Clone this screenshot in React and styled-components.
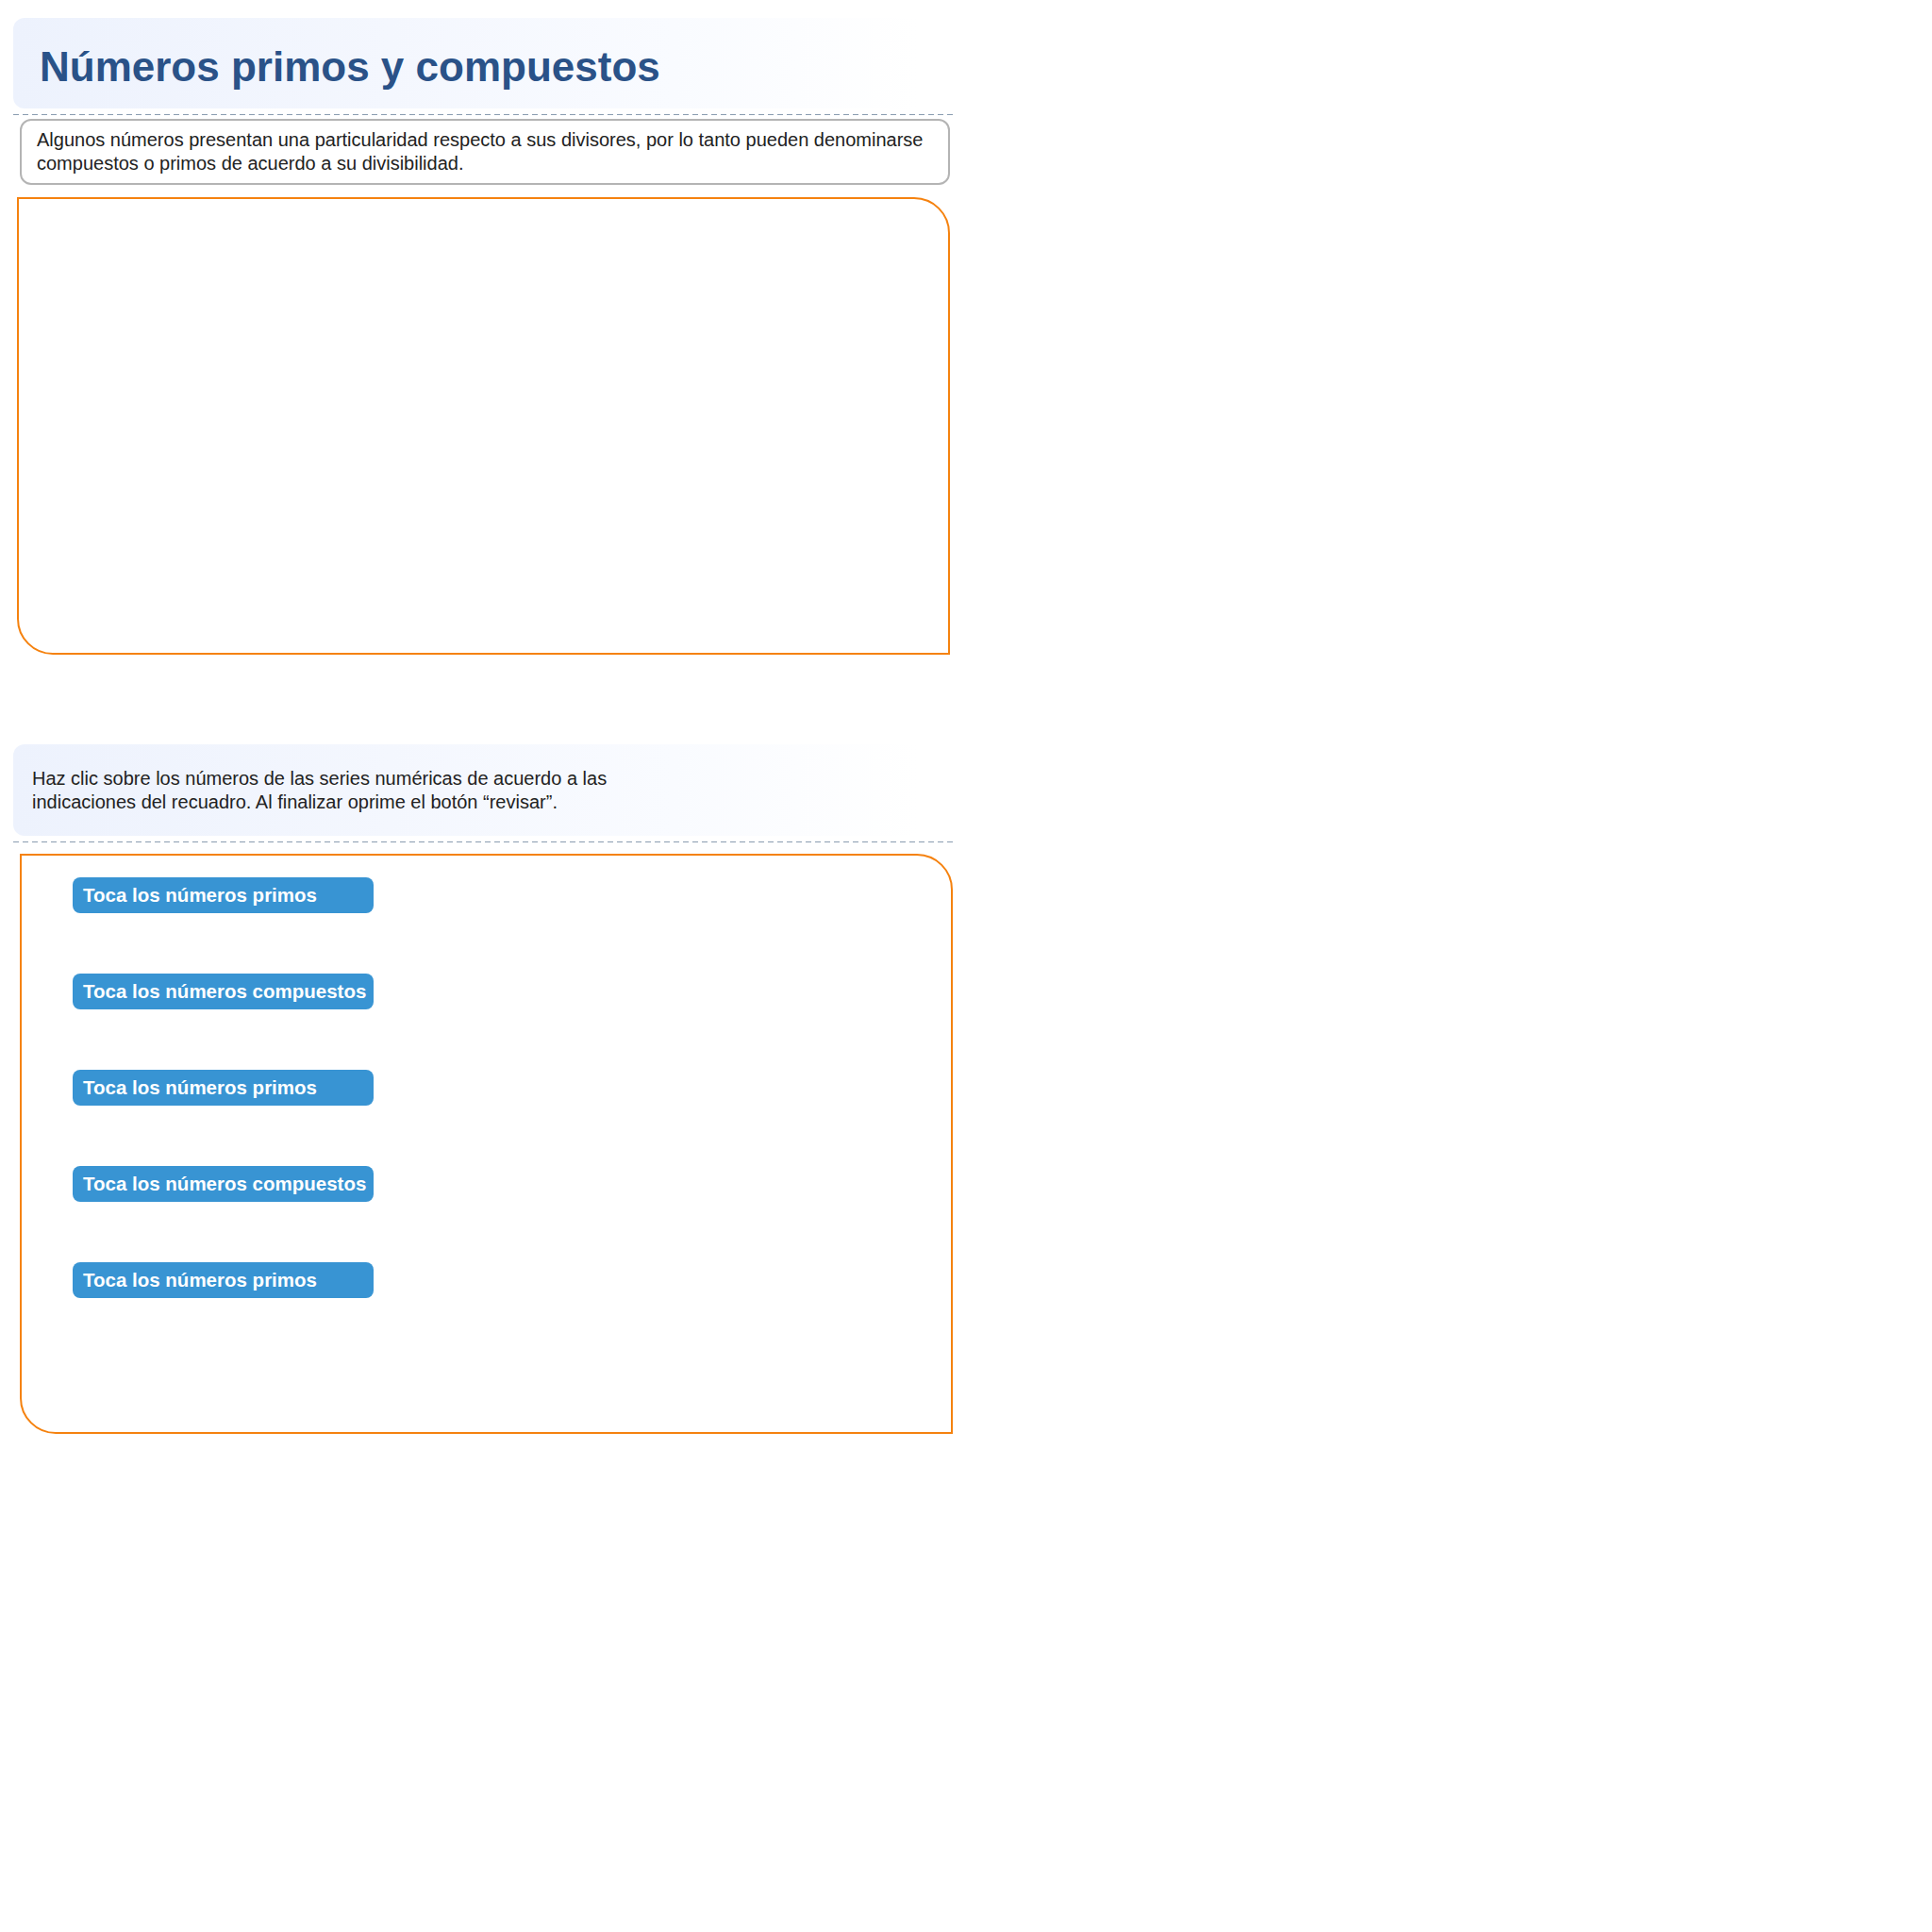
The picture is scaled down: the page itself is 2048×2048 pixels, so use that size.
import styled, { createGlobalStyle } from "styled-components";

const GlobalStyle = createGlobalStyle`
  body {
    margin: 0;
    background: #ffffff;
    font-family: "Liberation Sans", Arial, sans-serif;
    color: #222222;
  }
`;

const Page = styled.div`
  width: 999px;
  padding: 19px 0 40px 14px;
  display: flex;
  flex-direction: column;
`;

const Section = styled.section`
  display: flex;
  flex-direction: column;
  margin-top: ${props => props.$first ? "0" : "95px"};
`;

const Header = styled.div`
  border-radius: 12px;
  background: linear-gradient(to right, #edf2fd 0%, #f4f7fe 40%, #f9fbff 70%, #ffffff 96%);
  padding: ${props => props.$title ? "27px 28px 19px" : "24px 20px 23px"};
`;

const Title = styled.h1`
  margin: 0;
  font-size: 44px;
  font-weight: 700;
  line-height: normal;
  color: #2a5288;
`;

const Instructions = styled.p`
  margin: 0;
  max-width: 660px;
  font-size: 20px;
  line-height: 25px;
  color: #222222;
`;

const Divider = styled.div`
  height: 1px;
  margin: ${props => props.$after === "box" ? "6px 0 12px" : "6px 0 4px"};
  background: repeating-linear-gradient(to right, #8a9cb0 0 6px, transparent 6px 10px);
`;

const InfoBox = styled.div`
  margin: 0 6px 0 7px;
  border: 2px solid #b4b4b4;
  border-radius: 12px;
  padding: 8px 16px 8px;
  font-size: 20px;
  line-height: 25px;
`;

const ActivityBox = styled.div`
  box-sizing: border-box;
  height: ${props => props.$height}px;
  margin: ${props => props.$margin};
  border: 2px solid #f5820f;
  border-radius: 0 38px 0 38px;
  display: flex;
  flex-direction: column;
  align-items: flex-start;
  gap: 64px;
  padding: 23px 0 0 54px;
`;

const PromptButton = styled.button`
  box-sizing: border-box;
  width: 319px;
  height: 38px;
  border: none;
  border-radius: 8px;
  background: #3894d3;
  color: #ffffff;
  font-family: "Liberation Sans", Arial, sans-serif;
  font-size: 20.5px;
  font-weight: 700;
  text-align: left;
  padding: 0 0 0 11px;
  cursor: pointer;
`;

const prompts = [
  "Toca los números primos",
  "Toca los números compuestos",
  "Toca los números primos",
  "Toca los números compuestos",
  "Toca los números primos",
];

export default function App() {
  return (
    <>
      <GlobalStyle />
      <Page>
        <Section $first>
          <Header $title>
            <Title>Números primos y compuestos</Title>
          </Header>
          <Divider />
          <InfoBox>
            Algunos números presentan una particularidad respecto a sus divisores, por lo tanto pueden denominarse
            compuestos o primos de acuerdo a su divisibilidad.
          </InfoBox>
          <ActivityBox $height={485} $margin="13px 6px 0 4px" />
        </Section>

        <Section>
          <Header>
            <Instructions>
              Haz clic sobre los números de las series numéricas de acuerdo a las indicaciones del recuadro. Al
              finalizar oprime el botón “revisar”.
            </Instructions>
          </Header>
          <Divider $after="box" />
          <ActivityBox $height={615} $margin="0 3px 0 7px">
            {prompts.map((text, i) => (
              <PromptButton key={i}>{text}</PromptButton>
            ))}
          </ActivityBox>
        </Section>
      </Page>
    </>
  );
}
